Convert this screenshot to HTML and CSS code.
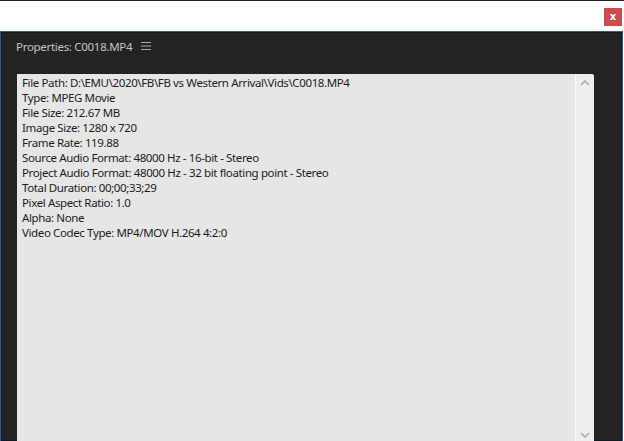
FILE: index.html
```html
<!DOCTYPE html>
<html lang="en">
<head>
    <meta charset="UTF-8">
    <meta name="viewport" content="width=device-width, initial-scale=1.0">
    <title>Properties</title>
    <link rel="stylesheet" href="styles.css">
</head>
<body>
    <div class="topbar">
        <button class="close-btn">x</button>
    </div>

    <div class="panel">
        <div class="panel-header">
            <span class="panel-title">Properties: C0018.MP4</span>
            <svg class="menu-icon" width="10" height="8" viewBox="0 0 10 8">
                <rect x="0" y="0" width="10" height="1" fill="#a8a8a8"/>
                <rect x="0" y="3.5" width="10" height="1" fill="#a8a8a8"/>
                <rect x="0" y="7" width="10" height="1" fill="#a8a8a8"/>
            </svg>
        </div>

        <div class="props-box">
            <div class="props-text">
                <div>File Path: D:\EMU\2020\FB\FB vs Western Arrival\Vids\C0018.MP4</div>
                <div>Type: MPEG Movie</div>
                <div>File Size: 212.67 MB</div>
                <div>Image Size: 1280 x 720</div>
                <div>Frame Rate: 119.88</div>
                <div>Source Audio Format: 48000 Hz - 16-bit - Stereo</div>
                <div>Project Audio Format: 48000 Hz - 32 bit floating point - Stereo</div>
                <div>Total Duration: 00;00;33;29</div>
                <div>Pixel Aspect Ratio: 1.0</div>
                <div>Alpha: None</div>
                <div>Video Codec Type: MP4/MOV H.264 4:2:0</div>
            </div>
            <div class="scrollbar">
                <svg width="10" height="6" viewBox="0 0 10 6">
                    <polyline points="1,5 5,1 9,5" fill="none" stroke="#a9a9a9" stroke-width="1.6"/>
                </svg>
                <svg width="10" height="6" viewBox="0 0 10 6">
                    <polyline points="1,1 5,5 9,1" fill="none" stroke="#a9a9a9" stroke-width="1.6"/>
                </svg>
            </div>
        </div>
    </div>
</body>
</html>
```

FILE: styles.css
```css
html, body {
    height: 100%;
}

body {
    margin: 0;
    font-family: "Noto Sans", "Open Sans", sans-serif;
    background: white;
    display: flex;
    flex-direction: column;
    overflow: hidden;
}

.topbar {
    border-top: 1px solid #1e1e1e;
    display: flex;
    justify-content: flex-end;
    align-items: flex-start;
    padding: 7px 2px 0 0;
    box-sizing: border-box;
    height: 31px;
}

.close-btn {
    width: 18px;
    height: 18px;
    background: #c94c4e;
    color: white;
    border: none;
    padding: 0;
    font-size: 10px;
    font-weight: bold;
    font-family: "DejaVu Sans", sans-serif;
    line-height: 16px;
}

.panel {
    flex: 1;
    background: #232323;
    border: 1px solid #2b5d8e;
    border-bottom: none;
    box-shadow: inset 0 0 0 1px #111a24;
    margin-right: 1px;
    display: flex;
    flex-direction: column;
    padding: 0 28px 0 15px;
}

.panel-header {
    height: 42px;
    display: flex;
    align-items: center;
    gap: 9px;
    padding-bottom: 14px;
    box-sizing: border-box;
}

.panel-title {
    color: #c4c4c4;
    font-size: 11.5px;
    letter-spacing: -0.3px;
}

.props-box {
    flex: 1;
    background: #e6e6e6;
    border-radius: 0 3px 0 0;
    margin-left: 1px;
    display: flex;
}

.props-text {
    flex: 1;
    padding: 1px 5px;
    font-size: 11.5px;
    letter-spacing: -0.38px;
    line-height: 15px;
    color: #1c1c1c;
}

.scrollbar {
    width: 18px;
    background: #eeeeee;
    border-left: 1px solid #fbfbfb;
    border-radius: 0 3px 0 0;
    display: flex;
    flex-direction: column;
    justify-content: space-between;
    align-items: center;
    padding: 6px 0 3px;
}
```
